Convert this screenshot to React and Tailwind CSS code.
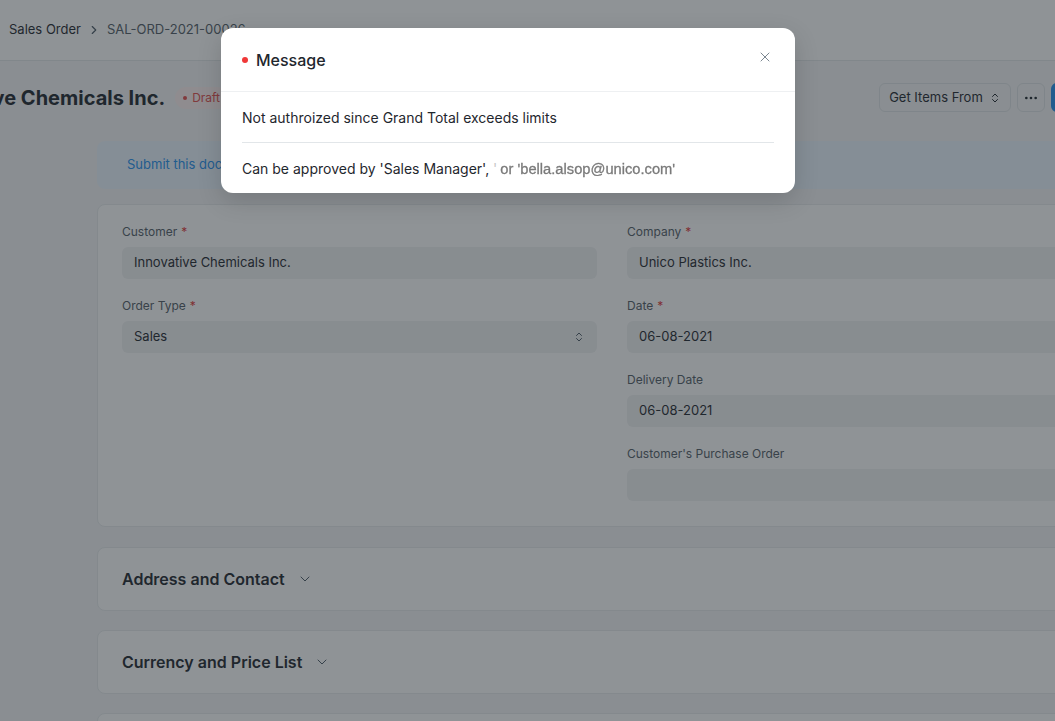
import { ChevronRight, ChevronsUpDown, ChevronDown, Ellipsis, X } from 'lucide-react';

const Label = ({ text, required }) => (
  <div className="h-4 text-[12px] leading-4 text-[#525c66] mb-[7px]">
    {text}
    {required && <span className="text-[#e03636] ml-1">*</span>}
  </div>
);

const Field = ({ label, required, value, select }) => (
  <div>
    <Label text={label} required={required} />
    <div className="h-8 rounded-md bg-[#f1f2f3] px-3 flex items-center justify-between text-[13px] text-[#1f272e]">
      <span>{value}</span>
      {select && <ChevronsUpDown className="w-3 h-3 text-[#4c5a67]" strokeWidth={2} />}
    </div>
  </div>
);

const Section = ({ title }) => (
  <div className="h-16 rounded-lg border border-[#e8ebed] bg-white px-[24px] flex items-center gap-3">
    <h3 className="text-[16px] font-semibold text-[#1f272e]">{title}</h3>
    <ChevronDown className="w-4 h-4 text-[#4c5a67]" strokeWidth={1.5} />
  </div>
);

export default function App() {
  return (
    <div className="relative w-[1055px] h-[721px] overflow-hidden bg-[#f4f5f6] font-['Inter',sans-serif]">
      {/* navbar */}
      <div className="h-[61px] bg-white border-b border-[#e2e6e9] flex items-center pl-[9px] gap-[6px] text-[13px]">
        <span className="text-[#1f272e]">Sales Order</span>
        <ChevronRight className="w-3.5 h-3.5 text-[#4c5a67]" />
        <span className="text-[#525c66]">SAL-ORD-2021-00026</span>
      </div>

      {/* page head */}
      <div className="h-[72px] flex items-center justify-between pt-[1px]">
        <div className="flex items-center gap-[10px]">
          <h1 className="ml-[-86px] text-[20px] font-bold text-[#1f272e] whitespace-nowrap">Innovative Chemicals Inc.</h1>
          <span className="flex items-center gap-[5px] rounded-full bg-[#fff0f0] px-2 py-0.5 text-[12px] text-[#e24c4c]">
            <span className="w-1 h-1 rounded-full bg-[#e24c4c]" />
            Draft
          </span>
        </div>
        <div className="flex items-center gap-1.5 mr-[-16px]">
          <button className="h-[29px] w-[132px] rounded-md border border-[#dfe3e6] bg-[#f4f5f6] flex items-center justify-center gap-1.5 text-[13px] text-[#1f272e]">
            Get Items From
            <ChevronsUpDown className="w-3 h-3" />
          </button>
          <button className="h-[29px] w-[28px] rounded-md border border-[#dfe3e6] bg-[#f4f5f6] flex items-center justify-center text-[#1f272e]">
            <Ellipsis className="w-4 h-4" />
          </button>
          <button className="h-[29px] w-[20px] rounded-l-md bg-[#2490ef]" />
        </div>
      </div>

      {/* main column */}
      <div className="ml-[97px] w-[1030px] flex flex-col">
        <div className="mt-[8px] h-12 rounded-lg bg-[#ebf5ff] flex items-center pl-[30px] text-[13px] text-[#2490ef]">
          Submit this document to confirm
        </div>

        <div className="mt-[15px] rounded-lg border border-[#e8ebed] bg-white px-[24px] pt-[19px] pb-[25px] grid grid-cols-2 gap-x-[30px]">
          <div className="flex flex-col gap-[19px]">
            <Field label="Customer" required value="Innovative Chemicals Inc." />
            <Field label="Order Type" required value="Sales" select />
          </div>
          <div className="flex flex-col gap-[19px]">
            <Field label="Company" required value="Unico Plastics Inc." />
            <Field label="Date" required value="06-08-2021" />
            <Field label="Delivery Date" value="06-08-2021" />
            <Field label="Customer's Purchase Order" value="" />
          </div>
        </div>

        <div className="mt-5 flex flex-col gap-[19px]">
          <Section title="Address and Contact" />
          <Section title="Currency and Price List" />
          <Section title="Items" />
        </div>
      </div>

      {/* backdrop */}
      <div className="absolute inset-0 bg-[rgba(31,39,46,0.5)]" />

      {/* modal */}
      <div className="absolute left-[221px] top-[28px] w-[574px] rounded-xl bg-white shadow-[0_8px_24px_rgba(0,0,0,0.15)]">
        <div className="h-[64px] border-b border-[#eef0f2] flex items-center justify-between pl-[21px] pr-[22px]">
          <div className="flex items-center gap-2">
            <span className="w-1.5 h-1.5 rounded-full bg-[#f03838]" />
            <span className="text-[16px] font-medium text-[#1f272e]">Message</span>
          </div>
          <X className="w-4 h-4 mb-[6px] text-[#7c8791]" strokeWidth={1.5} />
        </div>
        <div className="px-[21px] pt-4 pb-[14px] text-[14px] leading-5 text-[#1f272e]">
          <p>Not authroized since Grand Total exceeds limits</p>
          <hr className="mt-[14px] mb-4 border-[#e2e6e9]" />
          <p className="whitespace-nowrap">
            Can be approved by 'Sales Manager', <span className="text-[#c8c8c8]">'</span>
            <span className="ml-[3px] font-['Liberation_Sans',sans-serif] text-[14.7px] [-webkit-text-stroke:0.3px_#7a7a7a] text-[#7a7a7a] blur-[0.6px]">or 'bella.alsop@unico.com'</span>
          </p>
        </div>
      </div>
    </div>
  );
}
